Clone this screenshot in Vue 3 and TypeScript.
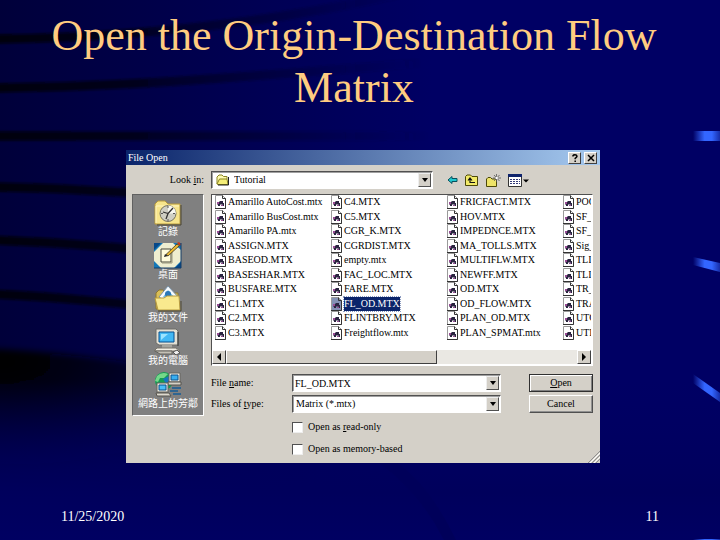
<script setup lang="ts">
import { computed, ref } from 'vue'

type PlaceIcon = 'history' | 'desktop' | 'documents' | 'computer' | 'network'

interface Place {
  label: string
  icon: PlaceIcon
}

const places: Place[] = [
  { label: '記錄', icon: 'history' },
  { label: '桌面', icon: 'desktop' },
  { label: '我的文件', icon: 'documents' },
  { label: '我的電腦', icon: 'computer' },
  { label: '網路上的芳鄰', icon: 'network' },
]

const files: string[] = [
  'Amarillo AutoCost.mtx', 'Amarillo BusCost.mtx', 'Amarillo PA.mtx', 'ASSIGN.MTX', 'BASEOD.MTX',
  'BASESHAR.MTX', 'BUSFARE.MTX', 'C1.MTX', 'C2.MTX', 'C3.MTX',
  'C4.MTX', 'C5.MTX', 'CGR_K.MTX', 'CGRDIST.MTX', 'empty.mtx',
  'FAC_LOC.MTX', 'FARE.MTX', 'FL_OD.MTX', 'FLINTBRY.MTX', 'Freightflow.mtx',
  'FRICFACT.MTX', 'HOV.MTX', 'IMPEDNCE.MTX', 'MA_TOLLS.MTX', 'MULTIFLW.MTX',
  'NEWFF.MTX', 'OD.MTX', 'OD_FLOW.MTX', 'PLAN_OD.MTX', 'PLAN_SPMAT.mtx',
  'POO', 'SF_', 'SF_', 'Sig_', 'TLI', 'TLI', 'TR_', 'TRA', 'UTO', 'UTI',
]

const fileName = ref('FL_OD.MTX')
const readOnly = ref(false)
const memoryBased = ref(false)
const selected = computed(() => files.indexOf(fileName.value))
</script>

<template>
  <main class="slide">
    <svg class="backdrop" viewBox="0 0 720 540" preserveAspectRatio="none" aria-hidden="true">
      <defs>
        <linearGradient id="base" x1="0" x2="1" y1="0" y2="0">
          <stop offset="0" stop-color="#00003a" />
          <stop offset="0.25" stop-color="#00004c" />
          <stop offset="0.6" stop-color="#000064" />
          <stop offset="1" stop-color="#000064" />
        </linearGradient>
        <linearGradient id="floor" x1="0" x2="0" y1="0" y2="1">
          <stop offset="0" stop-color="#000060" stop-opacity="0" />
          <stop offset="0.7" stop-color="#00005c" />
          <stop offset="1" stop-color="#000062" />
        </linearGradient>
        <linearGradient id="ray" gradientUnits="userSpaceOnUse" x1="0" x2="430" y1="0" y2="0">
          <stop offset="0" stop-color="#000008" />
          <stop offset="0.3" stop-color="#000014" stop-opacity="0.8" />
          <stop offset="1" stop-color="#00003a" stop-opacity="0" />
        </linearGradient>
        <radialGradient id="shade" gradientUnits="userSpaceOnUse" cx="0" cy="0" r="1" gradientTransform="translate(0 362) scale(270 110)">
          <stop offset="0" stop-color="#000004" />
          <stop offset="0.25" stop-color="#000008" stop-opacity="0.9" />
          <stop offset="1" stop-color="#000030" stop-opacity="0" />
        </radialGradient>
        <linearGradient id="glint" gradientUnits="userSpaceOnUse" x1="693" x2="722" y1="0" y2="0">
          <stop offset="0" stop-color="#3366ff" stop-opacity="0" />
          <stop offset="0.4" stop-color="#3366ff" />
          <stop offset="0.65" stop-color="#3366ff" />
          <stop offset="1" stop-color="#3366ff" stop-opacity="0.3" />
        </linearGradient>
        <filter id="soft"><feGaussianBlur stdDeviation="1" /></filter>
        <filter id="softer"><feGaussianBlur stdDeviation="3" /></filter>
      </defs>
      <rect width="720" height="540" fill="url(#base)" />
      <path d="M-20 348C60 352 120 360 280 385V480H-20Z" fill="url(#shade)" filter="url(#softer)" />
      <rect y="380" width="720" height="160" fill="url(#floor)" />
      <g fill="none" stroke="url(#ray)" stroke-width="9" filter="url(#soft)">
        <path d="M-10 39C120 38 260 25 400 -6" />
        <path d="M-10 88C120 87 260 76 420 63" />
        <path d="M-10 136H430V137" />
        <path d="M-10 187C60 188 120 192 260 200" />
        <path d="M-10 240C60 242 110 246 260 262" />
        <path d="M-10 294C60 297 110 302 260 318" />
      </g>
      <path d="M378 462Q420 492 444 540H456Q430 486 396 462Z" fill="#00005a" />
      <g fill="url(#glint)">
        <path d="M693 131H720V141H693Z" />
        <path d="M693 257L720 263V272L693 265Z" />
        <path d="M693 374L720 393V402L693 383Z" />
        <path d="M693 539H720V540H693Z" />
      </g>
    </svg>

    <h1 class="title">Open the Origin-Destination Flow Matrix</h1>

    <section class="dialog" aria-labelledby="dialog-title">
      <header class="titlebar">
        <h2 id="dialog-title">File Open</h2>
        <button type="button" class="caption" aria-label="Help">
          <svg width="8" height="8" viewBox="0 0 8 8"><path d="M2 2.5V1.6Q2.4 .8 4 .8T6 2.3Q6 3.2 4.2 4.3V5.2M4.2 6.4V8" fill="none" stroke="#000" stroke-width="1.5" /></svg>
        </button>
        <button type="button" class="caption" aria-label="Close">
          <svg width="8" height="8" viewBox="0 0 8 8"><path d="M1 1L7 7M7 1L1 7" fill="none" stroke="#000" stroke-width="1.5" /></svg>
        </button>
      </header>

      <div class="body">
        <label class="look-label" for="look-in">Look <u>i</u>n:</label>
        <div class="toolbar">
          <div class="combo">
            <svg class="combo-icon" width="14" height="12" viewBox="0 0 14 12">
              <path d="M1 10V3L3 1H6L7.500 2.500H11V5" fill="#fffbb0" stroke="#8a8420" />
              <path d="M1 10L3.500 5H11L12 10.500H2Z" fill="#f5ee78" stroke="#8a8420" />
              <path d="M12.500 3V11H2" fill="none" stroke="#222" />
            </svg>
            <select id="look-in" class="field look-in"><option>Tutorial</option></select>
            <span class="drop" aria-hidden="true"></span>
          </div>
          <div class="tools">
            <button type="button" class="tool" aria-label="Back">
              <svg width="11" height="10" viewBox="0 0 11 10"><path d="M1 5L5 1.500V3.500H10V6.500H5V8.500Z" fill="#20c8d0" stroke="#08505c" /></svg>
            </button>
            <button type="button" class="tool" aria-label="Up one level">
              <svg width="14" height="12" viewBox="0 0 14 12">
                <path d="M.5 11.500V2.500L2 1H5.500L7 2.500H12.500V11.500Z" fill="#f2ea68" stroke="#4c4808" />
                <path d="M5 9V4.500M3 6.500L5 4L7 6.500M5 8.500H10" fill="none" stroke="#111" stroke-width="1.200" />
              </svg>
            </button>
            <button type="button" class="tool" aria-label="Create new folder">
              <svg width="15" height="13" viewBox="0 0 15 13">
                <path d="M.5 12.500V5L2 3.500H4.500L6 5H10.500V12.500Z" fill="#eee468" stroke="#4c4808" />
                <path d="M10.500 0V8M7 4H15M8 1L13.500 7M13.500 1L8 7" stroke="#555" stroke-width=".8" />
                <circle cx="10.700" cy="4" r="1.200" fill="#fff" />
              </svg>
            </button>
            <button type="button" class="tool" aria-label="Views">
              <svg width="21" height="13" viewBox="0 0 21 13">
                <path d="M.5 .5H13.500V12.500H.5Z" fill="#fff" stroke="#333" />
                <path d="M0 0H14V3H0Z" fill="#10246c" />
                <path d="M2 5.500H12M2 7.500H12M2 9.500H12" stroke="#333a78" stroke-dasharray="2 1" />
                <path d="M15 5.500H21L18 8.500Z" fill="#000" />
              </svg>
            </button>
          </div>
        </div>

        <nav class="places" aria-label="Places">
          <button v-for="place in places" :key="place.label" type="button" class="place">
            <svg width="28" height="27" viewBox="0 0 28 27" aria-hidden="true">
              <g v-if="place.icon === 'history'">
                <path d="M1 25V5L4 2H11L14 5H26V25Z" fill="#f7e58c" stroke="#b89b3c" />
                <path d="M2 24V7H25" fill="none" stroke="#fff6c0" />
                <path d="M27 6V26H3" fill="none" stroke="#4c4630" />
                <circle cx="14" cy="14.500" r="8" fill="#cfcfc4" stroke="#77735c" />
                <path d="M14 14.500V6.500A8 8 0 0 1 22 14.500Z" fill="#f8f8f0" />
                <path d="M14 14.500L19 9M14 14.500L9 13M14 14.500L12 20" stroke="#333" stroke-width="1.300" />
                <path d="M14 7V9M14 20V22M7 14.500H9M19 14.500H21" stroke="#555" />
              </g>
              <g v-else-if="place.icon === 'desktop'">
                <path d="M0 1H27V26H0Z" fill="#1478b8" />
                <path d="M0 10L9 1H19L27 8V19L20 26H7L0 19Z" fill="#efeed0" />
                <path d="M0 1H7L0 8ZM27 26H21L27 20Z" fill="#074888" />
                <path d="M7 7H17V20H7Z" fill="#fffcdc" stroke="#464638" />
                <path d="M18 8V21H8" fill="none" stroke="#99967c" />
                <path d="M12 12.500L23 2L25.500 3.500L14 14Z" fill="#e8b832" stroke="#3c3520" stroke-width=".8" />
                <path d="M23 1L25 0L27 2L26 4Z" fill="#c83818" />
                <path d="M10 15L11 12L14 14Z" fill="#222" />
                <path d="M0 26H27V1" fill="none" stroke="#123c68" />
              </g>
              <g v-else-if="place.icon === 'documents'">
                <path d="M2 24V8L5 5H9L12 8H24V24Z" fill="#d9be58" stroke="#8e7930" />
                <path d="M5 12L14 1L26 14L20 22Z" fill="#f7fbff" stroke="#7892a8" />
                <path d="M9 12L14 5L21 13L17 18Z" fill="#69b8e8" />
                <circle cx="14" cy="9" r="3" fill="#2a78b8" />
                <path d="M1 13H10L13 11H25L26 25H4Z" fill="#f9e98e" stroke="#b99c3f" />
                <path d="M4 26H27V16" fill="none" stroke="#4c4630" />
              </g>
              <g v-else-if="place.icon === 'computer'">
                <path d="M2 1H22L24 3V17H5L2 15Z" fill="#e4e0d4" stroke="#6c6c68" />
                <path d="M5 4H20V14H5Z" fill="#42b8f4" stroke="#075090" />
                <path d="M7 6H14L7 12Z" fill="#9ce4ff" />
                <path d="M8 17H18V20H8Z" fill="#a5a59e" />
                <path d="M3 20H22L26 23H0Z" fill="#f2eee4" stroke="#77736a" />
                <path d="M1 23H18V26H6Z" fill="#c4c0b5" stroke="#65635e" />
                <path d="M19 24L23 22L26 25L22 27Z" fill="#eee" stroke="#555" />
                <path d="M24 4V18" stroke="#333" />
              </g>
              <g v-else>
                <circle cx="10" cy="10" r="9" fill="#159d54" />
                <path d="M3 5Q8 0 14 3L10 7L6 7L4 11L1 10Z" fill="#75d88a" />
                <path d="M9 8L15 5L18 10L13 14Z" fill="#1676bc" />
                <path d="M15 2H26V11H15Z" fill="#ece9df" stroke="#66645e" />
                <path d="M17 4H24V9H17Z" fill="#38aef0" stroke="#0b508c" />
                <path d="M14 11H27V14H14Z" fill="#d5d1c6" stroke="#55534d" />
                <path d="M3 12H14V21H3Z" fill="#ece9df" stroke="#66645e" />
                <path d="M5 14H12V19H5Z" fill="#49bdf5" stroke="#0b508c" />
                <path d="M2 22H15L17 25H3Z" fill="#dedacf" stroke="#55534d" />
                <path d="M18 17H27M16 20H24M19 23H27" stroke="#155c96" stroke-width="1.500" />
              </g>
            </svg>
            <span>{{ place.label }}</span>
          </button>
        </nav>

        <div class="list">
          <ul class="files" aria-label="Files">
            <li v-for="(file, index) in files" :key="index">
              <button type="button" class="file" :class="{ active: index === selected }" @click="fileName = file">
                <svg width="12" height="14" viewBox="0 0 12 14" aria-hidden="true">
                  <path class="page" d="M.5 .5H7.500L10.500 3.500V13.500H.5Z" fill="#fff" stroke="#9a9a9a" />
                  <path d="M7.500 .5V3.500H10.500V13.500H0" fill="none" stroke="#333" />
                  <path d="M2 7H4L5 6H8V8H9V11H7.500V9.500H5V11H3V9.500H2Z" fill="#2a2440" />
                  <path d="M2 7H4V9H2ZM6 10H8V11H6Z" fill="#984a94" />
                </svg>
                <span>{{ file }}</span>
              </button>
            </li>
          </ul>
          <div class="scrollbar">
            <button type="button" class="bevel" aria-label="Scroll left">
              <svg width="4" height="8" viewBox="0 0 4 8"><path d="M4 0V8L0 4Z" /></svg>
            </button>
            <div class="track"><div class="thumb bevel"></div></div>
            <button type="button" class="bevel" aria-label="Scroll right">
              <svg width="4" height="8" viewBox="0 0 4 8"><path d="M0 0V8L4 4Z" /></svg>
            </button>
          </div>
        </div>

        <form class="form" @submit.prevent>
          <label for="file-name">File <u>n</u>ame:</label>
          <div class="combo">
            <input id="file-name" v-model="fileName" class="field" type="text" />
            <button type="button" class="drop" aria-label="Recent file names"></button>
          </div>
          <button type="submit" class="push primary"><span><u>O</u>pen</span></button>

          <label for="file-type">Files of <u>t</u>ype:</label>
          <div class="combo">
            <select id="file-type" class="field"><option>Matrix (*.mtx)</option></select>
            <span class="drop" aria-hidden="true"></span>
          </div>
          <button type="button" class="push">Cancel</button>

          <div class="checks">
            <label><input v-model="readOnly" type="checkbox" /><span>Open as <u>r</u>ead-only</span></label>
            <label><input v-model="memoryBased" type="checkbox" /><span>Open as memory-based</span></label>
          </div>
        </form>
      </div>
      <svg class="grip" width="12" height="12" viewBox="0 0 12 12" aria-hidden="true">
        <path d="M0 12L12 0M4 12L12 4M8 12L12 8" stroke="#909090" />
        <path d="M2 12L12 2M6 12L12 6" stroke="#fff" />
      </svg>
    </section>

    <footer class="footer"><span>11/25/2020</span><span>11</span></footer>
  </main>
</template>

<style>
body {
  margin: 0;
  background: #000064;
}
</style>

<style scoped>
* {
  box-sizing: border-box;
}

.slide {
  position: relative;
  isolation: isolate;
  display: flex;
  flex-direction: column;
  min-height: 100vh;
  padding: 10px 0 14px;
  overflow: hidden;
  font-family: "Liberation Serif", "Noto Sans CJK TC", serif;
}

.backdrop {
  position: absolute;
  inset: 0;
  z-index: -1;
  width: 100%;
  height: 100%;
}

.title {
  margin: 0;
  padding: 0 48px 0 36px;
  color: #ffcc80;
  font-size: 44px;
  font-weight: 400;
  line-height: 52px;
  text-align: center;
}

.dialog {
  position: relative;
  margin: 36px 120px 0 126px;
  padding-bottom: 7px;
  background: #d4d0c8;
  color: #000;
  font-size: 10px;
  line-height: 14px;
}

button,
input,
select {
  margin: 0;
  padding: 0;
  border: 0;
  border-radius: 0;
  background: none;
  color: inherit;
  font: inherit;
}

svg {
  flex: none;
  display: block;
}

u {
  text-underline-offset: 1px;
}

.titlebar {
  display: flex;
  align-items: center;
  gap: 3px;
  height: 15px;
  padding: 0 3px 0 2px;
  background: linear-gradient(90deg, #0a246a, #a6caf0);
  color: #fff;
}

.titlebar h2 {
  flex: 1;
  margin: 0;
  font-size: 10px;
  font-weight: 400;
}

.caption,
.bevel {
  display: flex;
  align-items: center;
  justify-content: center;
  background: #d4d0c8;
  border: 1px solid;
  border-color: #fff #404040 #404040 #fff;
}

.caption {
  width: 13px;
  height: 12px;
}

.body {
  display: grid;
  grid-template-columns: 72px minmax(0, 1fr);
  grid-template-rows: 18px auto auto;
  column-gap: 7px;
  padding: 6px 7px 0 6px;
}

.look-label {
  align-self: center;
  text-align: right;
}

.toolbar {
  display: flex;
  gap: 14px;
}

.toolbar .combo {
  flex: 1;
}

.tools {
  display: flex;
  align-items: center;
  gap: 7px;
  width: 146px;
}

.combo {
  position: relative;
  height: 18px;
}

.combo-icon {
  position: absolute;
  top: 3px;
  left: 5px;
}

.field {
  appearance: none;
  display: block;
  width: 100%;
  height: 18px;
  padding: 0 16px 0 2px;
  background: #fff;
  border: 1px solid;
  border-color: #505050 #fff #fff #505050;
  box-shadow: inset 1px 1px #a0a0a0;
  outline: 0;
}

select.field {
  padding-left: 3px;
}

select.look-in {
  padding-left: 22px;
  background: none;
}

.toolbar .combo {
  background: #fff;
}

.drop {
  position: absolute;
  top: 2px;
  right: 2px;
  bottom: 2px;
  display: grid;
  place-items: center;
  width: 13px;
  background: #d4d0c8;
  border: 1px solid;
  border-color: #eee #505050 #505050 #eee;
}

span.drop {
  pointer-events: none;
}

.drop::before {
  content: "";
  border: 3px solid transparent;
  border-top: 4px solid #000;
  border-bottom: 0;
}

.places {
  grid-row: 2 / 4;
  align-self: start;
  display: flex;
  flex-direction: column;
  height: 222px;
  margin-top: 5px;
  padding: 4px 0 1px;
  background: #808080;
  border: 1px solid;
  border-color: #606060 #fff #fff #606060;
}

.place {
  flex: 1;
  display: flex;
  flex-direction: column;
  align-items: center;
  color: #fff;
  font-family: "Noto Sans CJK TC", sans-serif;
  line-height: 10px;
  white-space: nowrap;
}

.list {
  margin-top: 5px;
  padding: 0 1px 1px 0;
  background: #fff;
  border: 1px solid;
  border-color: #505050 #fff #fff #505050;
  overflow: hidden;
}

.files {
  display: grid;
  grid-auto-flow: column;
  grid-auto-columns: 116px;
  grid-template-rows: repeat(10, 1fr);
  height: 145px;
  margin: 0 0 10px;
  padding: 0 0 0 3px;
  overflow: hidden;
  list-style: none;
}

.file {
  display: flex;
  align-items: center;
  gap: 1px;
  line-height: 14px;
  white-space: nowrap;
}

.file.active span {
  background: #0a246a;
  color: #fff;
  outline: 1px dotted #8d9cc0;
}

.file.active .page {
  fill: #8491b5;
}

.scrollbar {
  display: flex;
  height: 14px;
}

.scrollbar button {
  width: 14px;
}

.track {
  flex: 1;
  background: #eae8e3;
}

.thumb {
  width: 60%;
  height: 100%;
}

.form {
  display: grid;
  grid-template-columns: 81px minmax(0, 1fr) 64px;
  align-items: center;
  row-gap: 3px;
  padding-top: 8px;
}

.form .combo {
  margin-right: 28px;
}

.push {
  height: 18px;
  background: #d4d0c8;
  border: 1px solid;
  border-color: #fff #505050 #505050 #fff;
  box-shadow: inset -1px -1px #909090;
}

.primary {
  border-color: #303030;
  box-shadow: inset 1px 1px #fff, inset -1px -1px #808080;
}

.checks {
  grid-column: 2 / 4;
  display: flex;
  flex-direction: column;
  align-items: flex-start;
  gap: 8px;
  padding-top: 4px;
}

.checks label {
  display: flex;
  align-items: center;
  gap: 5px;
}

.checks input {
  appearance: none;
  width: 11px;
  height: 11px;
  background: #fff;
  border: 1px solid;
  border-color: #505050 #eee #eee #505050;
}

.checks input:checked {
  background: #0a246a;
}

.grip {
  position: absolute;
  right: 0;
  bottom: 0;
}

.footer {
  display: flex;
  justify-content: space-between;
  margin-top: auto;
  padding: 0 61px;
  color: #fff;
  font-size: 14px;
  line-height: 18px;
}
</style>
